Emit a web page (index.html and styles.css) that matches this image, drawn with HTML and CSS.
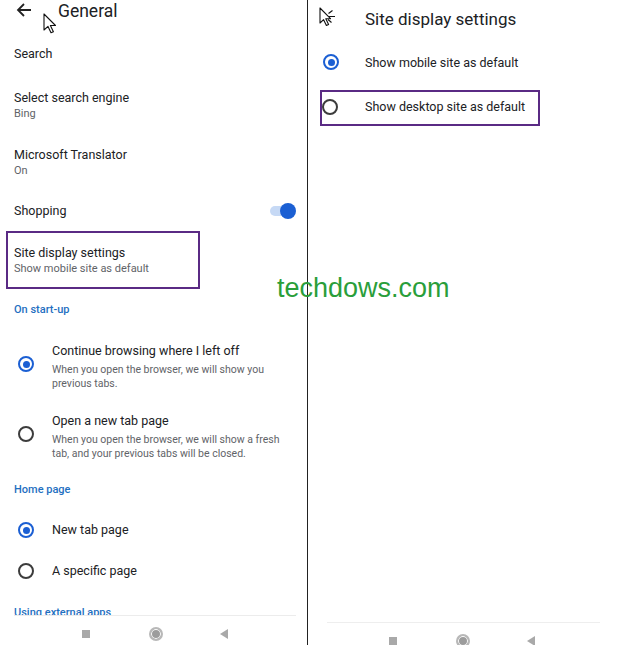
FILE: index.html
```html
<!DOCTYPE html>
<html lang="en">
<head>
  <meta charset="UTF-8">
  <meta name="viewport" content="width=device-width, initial-scale=1.0">
  <title>Site display settings</title>
  <link rel="stylesheet" href="styles.css">
</head>
<body>
  <div class="screen">

    <!-- Left screen: General settings -->
    <div class="panel panel-left">
      <div class="content content-left">
        <div class="header">
          <svg class="back-icon" width="16" height="14" viewBox="0 0 16 14">
            <path d="M15 7H2.5M8 1L2 7l6 6" fill="none" stroke="#222" stroke-width="1.8"/>
          </svg>
          <span class="header-title">General</span>
        </div>

        <div class="item item-search">
          <div class="item-title">Search</div>
        </div>
        <div class="item">
          <div class="item-title">Select search engine</div>
          <div class="item-sub">Bing</div>
        </div>
        <div class="item item-translator">
          <div class="item-title">Microsoft Translator</div>
          <div class="item-sub">On</div>
        </div>
        <div class="item item-shopping">
          <div class="item-title">Shopping</div>
          <div class="toggle"><div class="toggle-knob"></div></div>
        </div>
        <div class="item item-boxed">
          <div class="item-title">Site display settings</div>
          <div class="item-sub">Show mobile site as default</div>
        </div>

        <div class="section section-startup">On start-up</div>

        <div class="option option-first">
          <div class="radio checked"></div>
          <div class="option-text">
            <div class="option-title">Continue browsing where I left off</div>
            <div class="option-sub">When you open the browser, we will show you<br>previous tabs.</div>
          </div>
        </div>
        <div class="option">
          <div class="radio"></div>
          <div class="option-text">
            <div class="option-title">Open a new tab page</div>
            <div class="option-sub">When you open the browser, we will show a fresh<br>tab, and your previous tabs will be closed.</div>
          </div>
        </div>

        <div class="section section-home">Home page</div>

        <div class="option option-single option-newtab">
          <div class="radio checked"></div>
          <div class="option-title">New tab page</div>
        </div>
        <div class="option option-single">
          <div class="radio"></div>
          <div class="option-title">A specific page</div>
        </div>

        <div class="section section-apps">Using external apps</div>
      </div>

      <div class="navbar navbar-left">
        <div class="nav-icons">
          <div class="nav-square"></div>
          <div class="nav-circle"></div>
          <div class="nav-back"></div>
        </div>
      </div>

      <svg class="cursor cursor-left" width="13" height="21" viewBox="0 0 13 21">
        <path d="M1 1v16l4-3.6 3 6.4 2.4-1.1-3-6.2h5.1z" fill="#fff" stroke="#111" stroke-width="1.1" stroke-linejoin="round"/>
      </svg>
    </div>

    <!-- Right screen: Site display settings -->
    <div class="panel panel-right">
      <div class="content content-right">
        <div class="header-right">
          <span class="header-title-right">Site display settings</span>
        </div>
        <div class="site-option site-option-first">
          <div class="radio checked"></div>
          <span>Show mobile site as default</span>
        </div>
        <div class="site-option site-option-boxed">
          <div class="radio"></div>
          <span>Show desktop site as default</span>
        </div>
      </div>

      <div class="navbar navbar-right">
        <div class="nav-icons">
          <div class="nav-square"></div>
          <div class="nav-circle"></div>
          <div class="nav-back"></div>
        </div>
      </div>

      <svg class="cursor cursor-right" width="18" height="19" viewBox="0 0 18 19">
        <path d="M1 1v15l3.6-3.3 2.8 5.8 2.2-1-2.8-5.8h4.7z" fill="#fff" stroke="#111" stroke-width="1.1" stroke-linejoin="round"/>
        <path d="M10 9.5h6M9.5 6.5l4-3M9 12.5l3.5 3" stroke="#111" stroke-width="1.1"/>
      </svg>
    </div>

    <div class="watermark">techdows.com</div>
  </div>
</body>
</html>
```

FILE: styles.css
```css
/* Page */
body {
  margin: 0;
  background-color: #ffffff;
  font-family: Roboto, "Noto Sans", Arial, sans-serif;
  color: #202124;
  overflow: hidden;
}

.screen {
  position: relative;
  display: flex;
  width: 617px;
  height: 645px;
  overflow: hidden;
}

.panel {
  position: relative;
  display: flex;
  flex-direction: column;
  height: 645px;
  overflow: hidden;
}

.panel-left {
  width: 307px;
  border-right: 1px solid #222;
}

.panel-right {
  flex: 1;
}

.content {
  flex-shrink: 0;
  overflow: hidden;
}

.content-left {
  height: 615px;
}

.content-right {
  height: 622px;
}

/* Left header */
.header {
  display: flex;
  align-items: center;
  height: 22px;
  padding-left: 16px;
}

.back-icon {
  margin-top: -2px;
}

.header-title {
  margin-left: 26px;
  font-size: 17.5px;
  color: #202124;
}

/* Settings list */
.item {
  display: flex;
  flex-direction: column;
  justify-content: center;
  height: 40px;
  margin-top: 11px;
  padding-left: 14px;
  padding-right: 15px;
}

.item-search {
  margin-top: 12px;
}

.item-translator {
  margin-top: 17px;
}

.item-shopping {
  flex-direction: row;
  align-items: center;
  justify-content: space-between;
  margin-top: 9px;
}

.item-boxed {
  box-sizing: border-box;
  width: 194px;
  height: 58px;
  margin: 0 0 0 6px;
  padding-left: 6px;
  border: 2px solid #5a2a84;
}

.item-title {
  font-size: 12.5px;
  line-height: 16px;
}

.item-sub {
  font-size: 11px;
  line-height: 15px;
  color: #5f6368;
}

/* Toggle */
.toggle {
  display: flex;
  align-items: center;
  justify-content: flex-end;
  width: 22px;
  height: 10px;
  border-radius: 5px;
  background-color: #c6d9f5;
}

.toggle-knob {
  width: 16px;
  height: 16px;
  margin-right: -4px;
  border-radius: 50%;
  background-color: #1b5fd3;
}

/* Section headers */
.section {
  padding-left: 14px;
  font-size: 11px;
  font-weight: 500;
  line-height: 18px;
  color: #1f70c1;
}

.section-startup {
  margin-top: 12px;
}

.section-home {
  margin-top: 20px;
}

.section-apps {
  margin-top: 24px;
}

/* Radio options */
.option {
  display: flex;
  align-items: flex-start;
  margin-top: 21px;
  padding-left: 18px;
}

.option-first {
  margin-top: 23px;
}

.option .radio {
  margin-top: 14px;
  margin-right: 18px;
}

.option-single {
  align-items: center;
  margin-top: 23px;
}

.option-single .radio {
  margin-top: 0;
}

.option-newtab {
  margin-top: 22px;
}

.option-title {
  font-size: 12.5px;
  line-height: 18px;
}

.option-sub {
  margin-top: 3px;
  font-size: 10.5px;
  line-height: 14px;
  color: #5f6368;
}

.radio {
  flex-shrink: 0;
  position: relative;
  box-sizing: border-box;
  width: 16px;
  height: 16px;
  border: 2px solid #3c3c3c;
  border-radius: 50%;
}

.radio.checked {
  border-color: #1b5fd3;
}

.radio.checked::after {
  content: "";
  position: absolute;
  top: 2.5px;
  left: 2.5px;
  width: 7px;
  height: 7px;
  border-radius: 50%;
  background-color: #1b5fd3;
}

/* Right screen */
.header-right {
  display: flex;
  align-items: center;
  height: 38px;
  padding-left: 57px;
}

.header-title-right {
  font-size: 17px;
  color: #202124;
}

.site-option {
  display: flex;
  align-items: center;
  box-sizing: border-box;
  width: 220px;
  height: 36px;
  margin-left: 12px;
  border: 2px solid transparent;
  font-size: 12.5px;
}

.site-option .radio {
  margin-right: 27px;
}

.site-option-first {
  margin-top: 6px;
}

.site-option-first .radio {
  margin-left: 1px;
  margin-right: 26px;
}

.site-option-boxed {
  margin-top: 10px;
  padding-bottom: 3px;
  border-color: #5a2a84;
}

/* Navigation bar */
.navbar {
  flex-shrink: 0;
  height: 30px;
}

.navbar-left {
  margin: 0 11px 0 14px;
  border-top: 1px solid #ececec;
}

.navbar-right {
  margin: 0 17px 0 19px;
  border-top: 1px solid #eeeeee;
}

.nav-icons {
  display: flex;
  align-items: center;
  height: 14px;
  margin-top: 11px;
}

.navbar-left .nav-icons {
  padding-left: 68px;
}

.navbar-right .nav-icons {
  padding-left: 62px;
}

.nav-square {
  width: 8px;
  height: 8px;
  background-color: #a9a9a9;
}

.nav-circle {
  box-sizing: border-box;
  width: 14px;
  height: 14px;
  margin-left: 59px;
  border: 2px solid #b8b8b8;
  border-radius: 50%;
  background-color: #9c9c9c;
  box-shadow: inset 0 0 0 1px #ffffff;
}

.nav-back {
  width: 0;
  height: 0;
  margin-left: 57px;
  border-top: 5px solid transparent;
  border-bottom: 5px solid transparent;
  border-right: 8px solid #a9a9a9;
}

/* Overlays */
.cursor {
  position: absolute;
}

.cursor-left {
  top: 13px;
  left: 43px;
}

.cursor-right {
  top: 7px;
  left: 11px;
}

.watermark {
  position: absolute;
  top: 275px;
  left: 277px;
  font-family: "Liberation Sans", Arial, sans-serif;
  font-size: 27px;
  line-height: 1;
  color: #2a9e3a;
}
```
